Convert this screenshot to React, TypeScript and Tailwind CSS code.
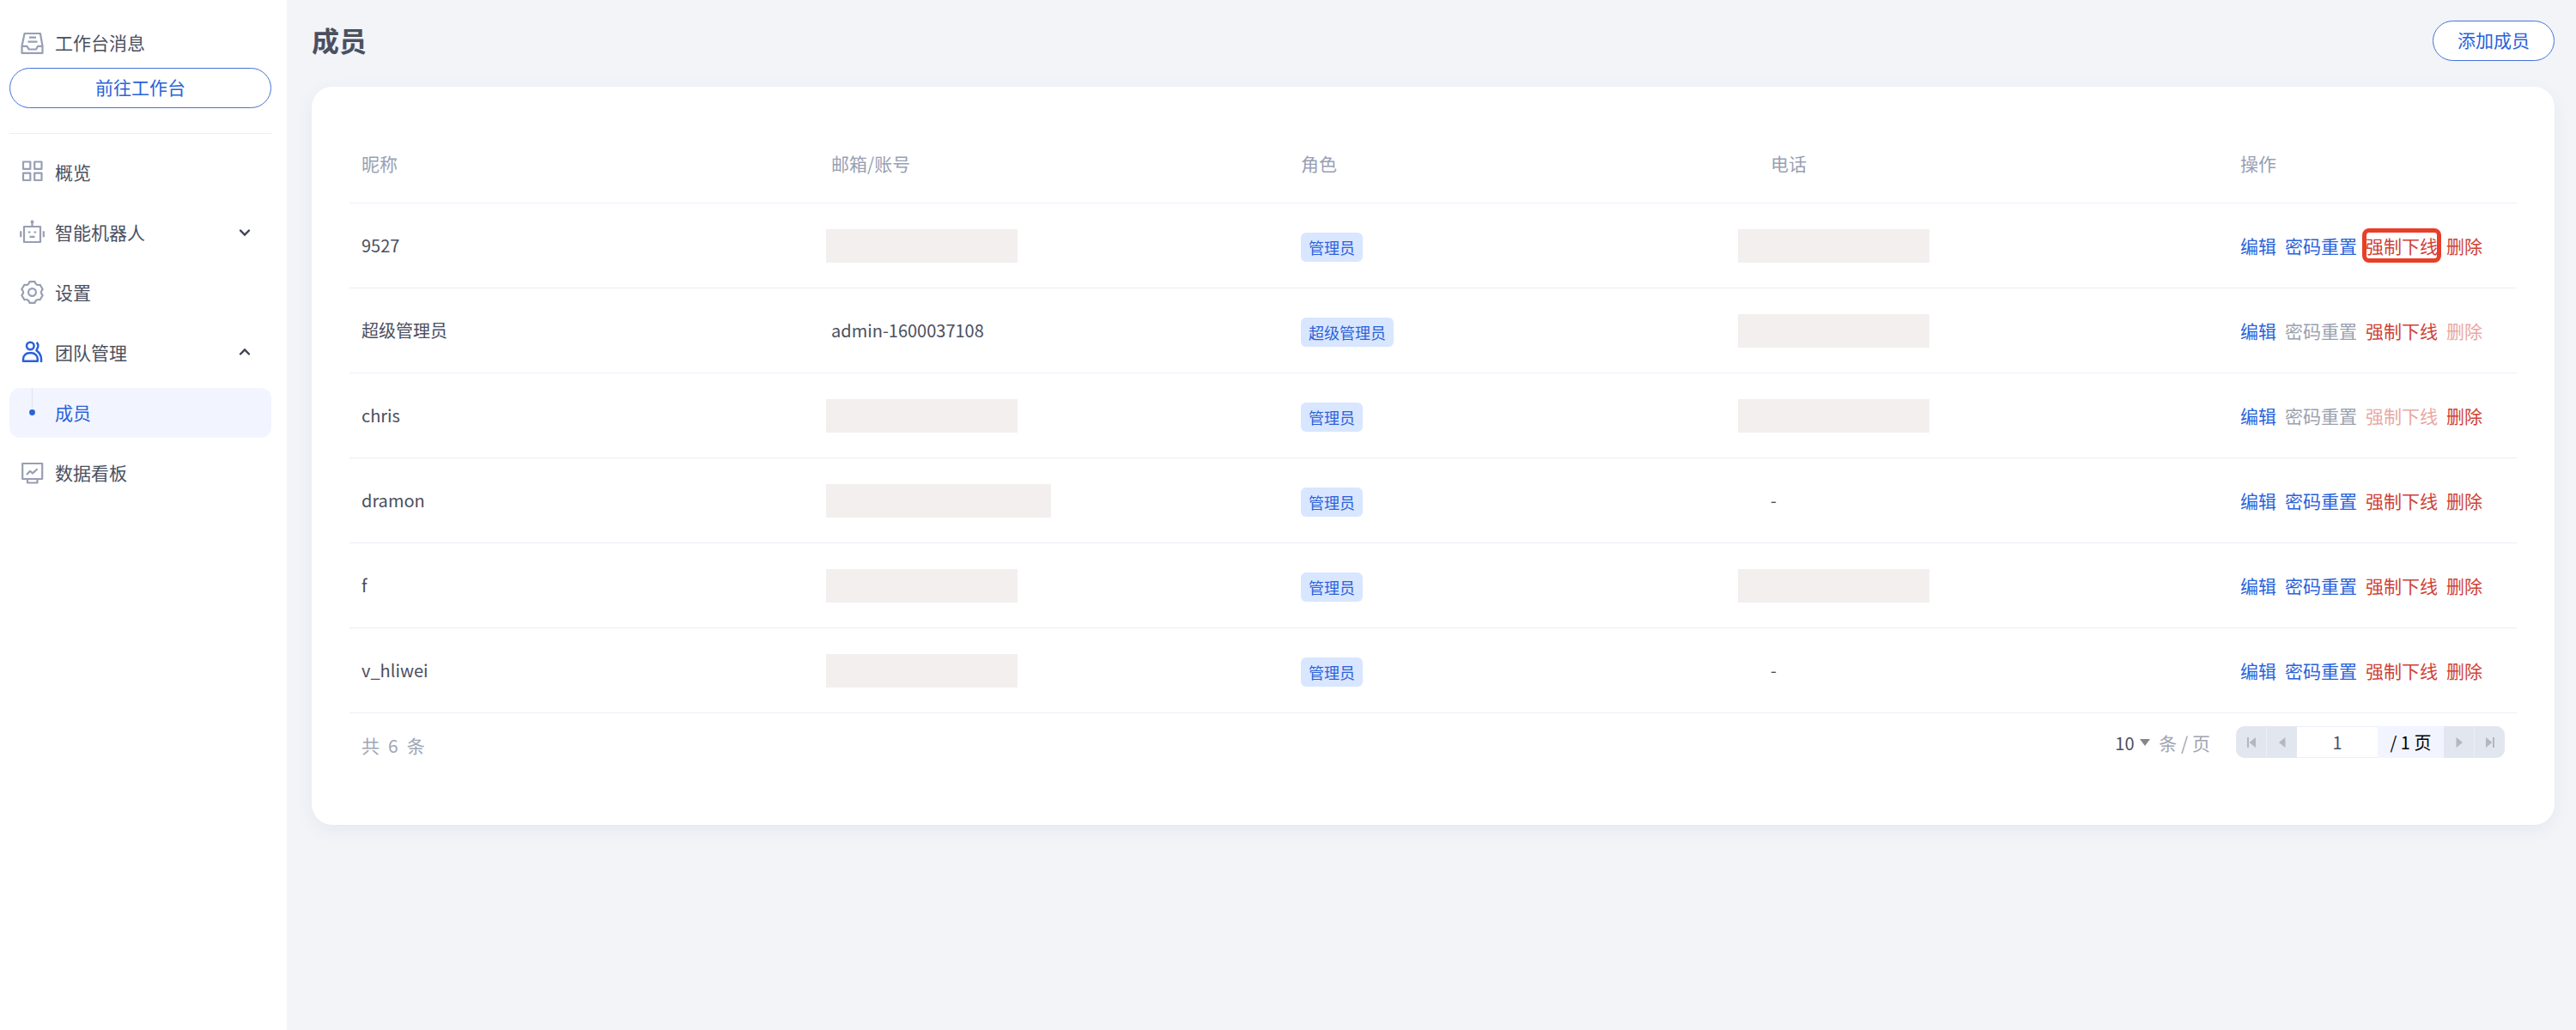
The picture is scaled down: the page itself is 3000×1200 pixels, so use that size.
/**
 * Page: Members
 * ----------------------------------------------------------------------------
 * Sidebar navigation + the member list of the team.
 *   Sidebar     → workbench entry, menu tree
 *   MemberTable → one row per member with role badge and row actions
 *   Pagination  → total, page size and pager
 */
import { useState } from 'react';
import type { ReactNode } from 'react';
import { clsx } from 'clsx';

type ActionState = 'normal' | 'disabled' | 'focused';

interface Member {
  name: string;
  // a missing value is masked, '-' means not filled in
  account?: string;
  phone?: string;
  wideMask?: boolean;
  role: string;
  reset?: ActionState;
  kick?: ActionState;
  remove?: ActionState;
}

const MEMBERS: Member[] = [
  { name: '9527', role: '管理员', kick: 'focused' },
  {
    name: '超级管理员',
    account: 'admin-1600037108',
    role: '超级管理员',
    reset: 'disabled',
    remove: 'disabled'
  },
  { name: 'chris', role: '管理员', reset: 'disabled', kick: 'disabled' },
  { name: 'dramon', role: '管理员', phone: '-', wideMask: true },
  { name: 'f', role: '管理员' },
  { name: 'v_hliwei', role: '管理员', phone: '-' }
];

/* ---------------------------------- Icons --------------------------------- */

function MenuIcon({ children, active }: { children: ReactNode; active?: boolean }) {
  return (
    <svg
      viewBox="0 0 30 30"
      aria-hidden="true"
      className={clsx('size-[30px] shrink-0', active ? 'text-[#2b62d9]' : 'text-[#989fb4]')}
      fill="none"
      stroke="currentColor"
      strokeWidth={active ? 2.5 : 2.2}
      strokeLinejoin="round"
    >
      {children}
    </svg>
  );
}

const InboxIcon = () => (
  <MenuIcon>
    <path d="M5.6 4h18.3l2.6 14.5v8.3H2.5v-8.3z" />
    <path d="M2.5 18.8h6l2 3.7h8.5l2-3.7h5.5M11 8.7h8M9.5 13.7h11" />
  </MenuIcon>
);

const GridIcon = () => (
  <MenuIcon>
    <rect x="4" y="2.5" width="8.3" height="8.3" />
    <rect x="17.2" y="2.5" width="8.3" height="8.3" />
    <rect x="4" y="15.7" width="8.3" height="8.3" />
    <rect x="17.2" y="15.7" width="8.3" height="8.3" />
  </MenuIcon>
);

const RobotIcon = () => (
  <MenuIcon>
    <circle cx="14.5" cy="2.5" r="1.9" fill="currentColor" stroke="none" />
    <path d="M14.5 3v5M1.2 13.3v7M27.8 13.3v7" />
    <rect x="5" y="8" width="19" height="18" />
    <path d="M9.8 14.5h2.6M16.6 14.5h2.6M11.5 19.8h6" />
  </MenuIcon>
);

const GearIcon = () => (
  <MenuIcon>
    <path d="M11.4 2.2H17.6Q18.8 7.1 23.6 5.7L26.7 11Q23.1 14.5 26.7 18L23.6 23.3Q18.8 21.9 17.6 26.8H11.4Q10.2 21.9 5.4 23.3L2.3 18Q5.9 14.5 2.3 11L5.4 5.7Q10.2 7.1 11.4 2.2Z" />
    <circle cx="14.5" cy="14.5" r="4.4" />
  </MenuIcon>
);

const TeamIcon = () => (
  <MenuIcon active>
    <circle cx="12.3" cy="7" r="4.3" />
    <path d="M4 24.7v-2.4a7 7 0 0 1 7-7h2.8a7 7 0 0 1 7 7v2.4z" />
    <path d="M19.6 3q2.8 2.6 1.2 6.2l-1.4 3q5.6 4.2 5.6 9.8v4" />
  </MenuIcon>
);

const BoardIcon = () => (
  <MenuIcon>
    <rect x="3.2" y="4" width="23" height="18" />
    <path d="M8 17l4-4.2 3 2.6 5.6-5.2M9 22v4.5h11.5V22" />
  </MenuIcon>
);

function Chevron({ up }: { up?: boolean }) {
  return (
    <svg viewBox="0 0 16 16" aria-hidden="true" className="mr-[23px] ml-auto size-4" fill="none">
      <path
        d={up ? 'M3 9.5l5-5 5 5' : 'M3 5.5l5 5 5-5'}
        stroke="#3c4254"
        strokeWidth="2.4"
        strokeLinecap="round"
      />
    </svg>
  );
}

/* --------------------------------- Sidebar -------------------------------- */

interface MenuItemProps {
  icon: ReactNode;
  label: string;
  open?: boolean;
}

function MenuItem({ icon, label, open }: MenuItemProps) {
  return (
    <a href="#" className="flex h-[58px] items-center gap-[11px] pl-3">
      {icon}
      <span className="pb-[3px]">{label}</span>
      {open !== undefined && <Chevron up={open} />}
    </a>
  );
}

function Sidebar() {
  return (
    <aside className="w-[334px] shrink-0 bg-white pt-[35px] pr-[18px] pl-[11px]">
      <a href="#" className="flex h-[30px] items-center gap-[11px] pl-3">
        <InboxIcon />
        <span className="pb-[3px]">工作台消息</span>
      </a>
      <button
        type="button"
        className="mt-[14px] h-[47px] w-full rounded-full border border-[#4573d6] pb-[3px] text-[#2b62d9]"
      >
        前往工作台
      </button>
      <hr className="mt-[29px] border-[#eceef3]" />

      <nav className="mt-4 flex flex-col gap-3">
        <MenuItem icon={<GridIcon />} label="概览" />
        <MenuItem icon={<RobotIcon />} label="智能机器人" open={false} />
        <MenuItem icon={<GearIcon />} label="设置" />
        <MenuItem icon={<TeamIcon />} label="团队管理" open />
        <a
          href="#"
          aria-current="page"
          className="flex h-[58px] items-center gap-[11px] rounded-xl bg-[#f2f5ff] pl-3 text-[#2b62d9]"
        >
          <svg viewBox="0 0 30 58" aria-hidden="true" className="h-[58px] w-[30px] shrink-0">
            <path d="M14.5 0v24" stroke="#e4e8f4" strokeWidth="1.6" />
            <circle cx="14.5" cy="28.5" r="3.4" fill="#2b62d9" />
          </svg>
          <span className="pb-[3px]">成员</span>
        </a>
        <MenuItem icon={<BoardIcon />} label="数据看板" />
      </nav>
    </aside>
  );
}

/* ---------------------------------- Table --------------------------------- */

interface RowActionProps {
  label: string;
  danger?: boolean;
  state?: ActionState;
}

function RowAction({ label, danger, state = 'normal' }: RowActionProps) {
  const disabled = state === 'disabled';
  return (
    <button
      type="button"
      disabled={disabled}
      className={clsx(
        'relative',
        danger && (disabled ? 'text-[#e9a8a2]' : 'text-[#cf4236]'),
        !danger && (disabled ? 'text-[#9ba1ae]' : 'text-[#2b62d9]')
      )}
    >
      {label}
      {state === 'focused' && (
        <span className="absolute -inset-x-1 -inset-y-1 rounded-lg border-5 border-[#e83f28]" />
      )}
    </button>
  );
}

function Mask({ wide, className }: { wide?: boolean; className: string }) {
  return (
    <div className={clsx('h-[39px] bg-[#f3efee]', wide ? 'w-[262px]' : 'w-[223px]', className)} />
  );
}

function MemberTable() {
  return (
    <table className="w-full table-fixed border-separate border-spacing-0 text-left [&_td]:h-[99px] [&_td]:border-b [&_td]:border-[#eceef7] [&_td]:pl-[14px] [&_th]:h-[89px] [&_th]:border-b [&_th]:border-[#e9eefa] [&_th]:pb-[5px] [&_th]:pl-[14px] [&_th]:font-normal">
      <thead className="text-[#989fb4]">
        <tr>
          <th>昵称</th>
          <th>邮箱/账号</th>
          <th>角色</th>
          <th>电话</th>
          <th className="w-[336px]">操作</th>
        </tr>
      </thead>
      <tbody>
        {MEMBERS.map((m) => (
          <tr key={m.name}>
            <td className="text-xl">{m.name}</td>
            <td className="text-xl">
              {m.account ?? <Mask wide={m.wideMask} className="-ml-[6px]" />}
            </td>
            <td>
              <span className="mt-1 inline-flex h-[34px] items-center rounded-md bg-[#d9e6ff] px-[9px] align-middle text-lg text-[#2b62d9]">
                {m.role}
              </span>
            </td>
            <td className="text-xl">{m.phone ?? <Mask className="-ml-[38px]" />}</td>
            <td>
              <div className="flex gap-[10px]">
                <RowAction label="编辑" />
                <RowAction label="密码重置" state={m.reset} />
                <RowAction label="强制下线" danger state={m.kick} />
                <RowAction label="删除" danger state={m.remove} />
              </div>
            </td>
          </tr>
        ))}
      </tbody>
    </table>
  );
}

/* ------------------------------- Pagination ------------------------------- */

function PagerButton({ label, d }: { label: string; d: string }) {
  return (
    <button
      type="button"
      aria-label={label}
      disabled
      className="flex w-[35px] items-center justify-center bg-[#e2e6ef]"
    >
      <svg viewBox="0 0 12 14" className="h-[14px] w-3 text-[#b4b7bd]" fill="currentColor">
        <path d={d} />
      </svg>
    </button>
  );
}

function Pagination() {
  const [page, setPage] = useState('1');
  return (
    <div className="flex items-start pt-[15px] pr-[14px] pl-[14px]">
      <div className="flex gap-[10px] leading-[44px] text-[#a0a6b6]">
        <span>共</span>
        <span>6</span>
        <span>条</span>
      </div>

      <div className="ml-auto flex h-[37px] items-center">
        <div className="relative">
          <select
            aria-label="每页条数"
            defaultValue="10"
            className="w-[41px] appearance-none bg-transparent text-xl"
          >
            <option>10</option>
            <option>20</option>
            <option>50</option>
          </select>
          <svg
            viewBox="0 0 12 8"
            aria-hidden="true"
            className="pointer-events-none absolute top-1/2 right-0 h-2 w-3 -translate-y-1/2"
          >
            <path d="M0 0h12L6 8z" fill="#85878c" />
          </svg>
        </div>
        <span className="ml-[10px] text-[#a0a5b0]">条 / 页</span>

        <div className="ml-[30px] flex h-[37px] overflow-hidden rounded-[10px]">
          <div className="flex gap-px bg-[#eceff6]">
            <PagerButton label="首页" d="M1 1h2v12H1zM11 1v12L3.6 7z" />
            <PagerButton label="上一页" d="M9.5 1v12L2 7z" />
          </div>
          <input
            aria-label="页码"
            value={page}
            onChange={(e) => setPage(e.target.value)}
            className="w-[94px] border-y border-[#eceff8] bg-white text-center text-xl"
          />
          <span className="flex w-[77px] items-center justify-center bg-[#f2f5ff] text-xl text-black">
            / 1 页
          </span>
          <div className="flex gap-px bg-[#eceff6]">
            <PagerButton label="下一页" d="M2.5 1v12L10 7z" />
            <PagerButton label="末页" d="M9 1h2v12H9zM1 1v12l7.4-6z" />
          </div>
        </div>
      </div>
    </div>
  );
}

/* ----------------------------------- Page --------------------------------- */

export default function App() {
  return (
    <div className="flex min-h-screen bg-[#f2f4f8] font-['Noto_Sans_CJK_SC',sans-serif] text-[21px] leading-8 text-[#4b5060]">
      <Sidebar />
      <main className="min-w-0 flex-1 pt-6 pr-[25px] pb-6 pl-[29px]">
        <header className="flex h-[47px] items-center justify-between">
          <h1 className="pb-[3px] text-[32px] font-bold">成员</h1>
          <button
            type="button"
            className="h-[47px] rounded-full border border-[#4573d6] bg-white px-7 pb-[3px] text-[#2b62d9]"
          >
            添加成员
          </button>
        </header>

        <section className="mt-[30px] rounded-3xl bg-white px-[44px] pt-[47px] pb-[71px] shadow-[0_6px_20px_rgba(54,88,120,0.07)]">
          <MemberTable />
          <Pagination />
        </section>
      </main>
    </div>
  );
}
